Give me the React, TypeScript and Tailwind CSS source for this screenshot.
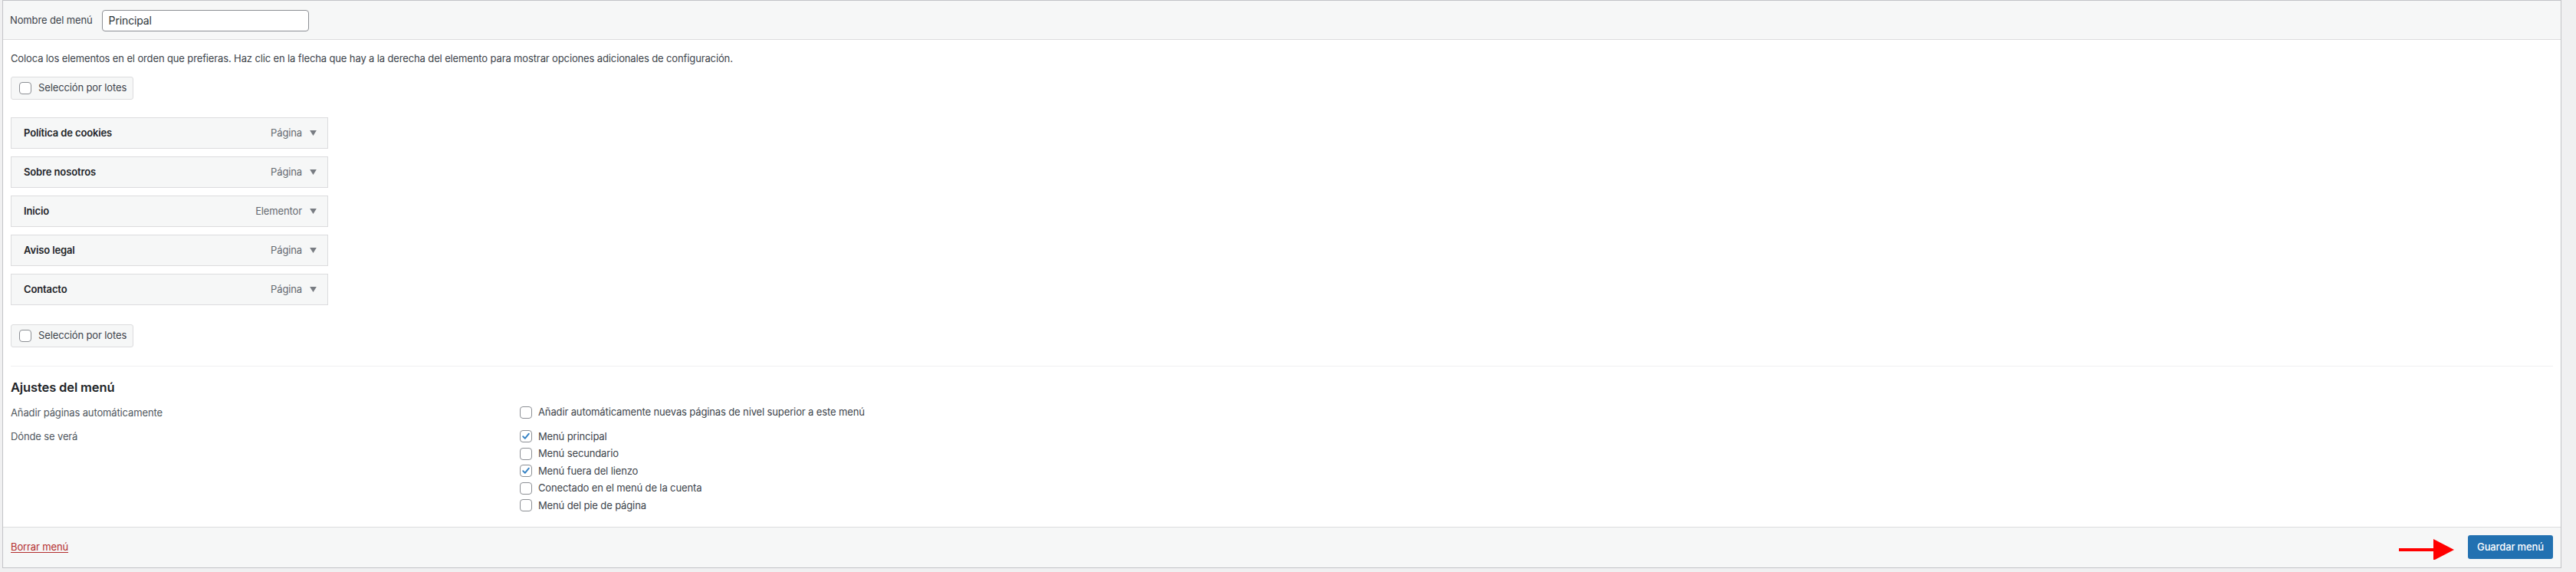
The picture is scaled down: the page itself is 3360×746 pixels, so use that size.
import React from "react";

const items = [
	{ title: "Política de cookies", type: "Página" },
	{ title: "Sobre nosotros", type: "Página" },
	{ title: "Inicio", type: "Elementor" },
	{ title: "Aviso legal", type: "Página" },
	{ title: "Contacto", type: "Página" },
];

const locations = [
	{ label: "Menú principal", checked: true },
	{ label: "Menú secundario", checked: false },
	{ label: "Menú fuera del lienzo", checked: true },
	{ label: "Conectado en el menú de la cuenta", checked: false },
	{ label: "Menú del pie de página", checked: false },
];

function Checkbox({ checked = false }: { checked?: boolean }) {
	return (
		<span className="flex h-4 w-4 shrink-0 items-center justify-center rounded-[4px] border border-[#8c8f94] bg-white">
			{checked && (
				<svg viewBox="0 0 16 16" className="h-[14px] w-[14px]">
					<path d="M3.6 8.2 L6.6 11.2 L12.4 4.2" fill="none" stroke="#3582c4" strokeWidth="2.2" strokeLinecap="round" strokeLinejoin="round" />
				</svg>
			)}
		</span>
	);
}

function BulkButton() {
	return (
		<div className="flex h-[30px] w-[160px] items-center gap-[9px] rounded-[3px] border border-[#dcdcde] bg-[#f6f7f7] pl-[10px] text-[13px] text-[#3c434a]">
			<Checkbox />
			<span>Selección por lotes</span>
		</div>
	);
}

function MenuItem({ title, type }: { title: string; type: string }) {
	return (
		<li className="flex h-[41px] w-[414px] items-center border border-[#dcdcde] bg-[#f6f7f7] pl-4 pr-[14px]">
			<span className="flex-1 text-[13px] font-semibold text-[#1d2327]">{title}</span>
			<span className="text-[13px] text-[#646970]">{type}</span>
			<svg viewBox="0 0 10 8" className="ml-[10px] h-[7px] w-[9px]">
				<path d="M0 0 L10 0 L5 8 Z" fill="#787c82" />
			</svg>
		</li>
	);
}

export default function App() {
	return (
		<div className="h-[746px] w-[3360px] overflow-hidden bg-[#f0f0f1] font-['Inter',sans-serif] tracking-[-0.13px]">
			<div className="ml-[3px] flex w-[3338px] flex-col border border-[#c3c4c7] bg-white">
				<div className="flex h-[51px] items-center gap-3 border-b border-[#dcdcde] bg-[#f6f7f7] px-[9px] pt-px">
					<label className="text-[13px] text-[#3c434a]">Nombre del menú</label>
					<div className="flex h-[28px] w-[270px] items-center rounded-[4px] border border-[#8c8f94] bg-white px-2 text-[14px] text-[#2c3338]">
						Principal
					</div>
				</div>

				<div className="flex flex-col px-[10px] pt-[15px]">
					<p className="text-[13px] leading-[18px] text-[#3c434a]">
						Coloca los elementos en el orden que prefieras. Haz clic en la flecha que hay a la derecha del elemento para mostrar opciones adicionales de configuración.
					</p>
					<div className="mt-[15px]">
						<BulkButton />
					</div>
					<ul className="mt-[23px] flex flex-col gap-[10px]">
						{items.map((item) => (
							<MenuItem key={item.title} {...item} />
						))}
					</ul>
					<div className="mt-[25px]">
						<BulkButton />
					</div>
					<div className="mt-[24px] h-px bg-[#f0f0f1]" />

					<h3 className="mt-[16px] text-[16.5px] font-semibold leading-[22px] text-[#1d2327]">Ajustes del menú</h3>
					<div className="mt-[11px] flex">
						<div className="w-[664px] text-[13px] leading-[22px] text-[#50575e]">Añadir páginas automáticamente</div>
						<label className="flex h-[22px] items-center gap-2 text-[13px] text-[#3c434a]">
							<Checkbox />
							<span>Añadir automáticamente nuevas páginas de nivel superior a este menú</span>
						</label>
					</div>
					<div className="mt-[9px] flex pb-[16px]">
						<div className="w-[664px] text-[13px] leading-[22px] text-[#50575e]">Dónde se verá</div>
						<div className="flex flex-col">
							{locations.map((loc) => (
								<label key={loc.label} className="flex h-[22.5px] items-center gap-2 text-[13px] text-[#3c434a]">
									<Checkbox checked={loc.checked} />
									<span>{loc.label}</span>
								</label>
							))}
						</div>
					</div>
				</div>

				<div className="flex h-[53px] items-center justify-between border-t border-[#dcdcde] bg-[#f6f7f7] pl-[10px] pr-[10px]">
					<a href="#" className="text-[13px] text-[#b32d2e] underline underline-offset-2">
						Borrar menú
					</a>
					<div className="flex items-center gap-[18px]">
						<svg viewBox="0 0 72 28" className="mt-[4px] h-[28px] w-[72px]">
							<rect x="0" y="13" width="46" height="4" fill="#ff0000" />
							<path d="M45 1 L72 15 L45 29 Z" fill="#ff0000" />
						</svg>
						<button className="h-[31px] w-[111px] rounded-[3px] bg-[#2271b1] text-[13px] font-medium text-white">
							Guardar menú
						</button>
					</div>
				</div>
			</div>
		</div>
	);
}
